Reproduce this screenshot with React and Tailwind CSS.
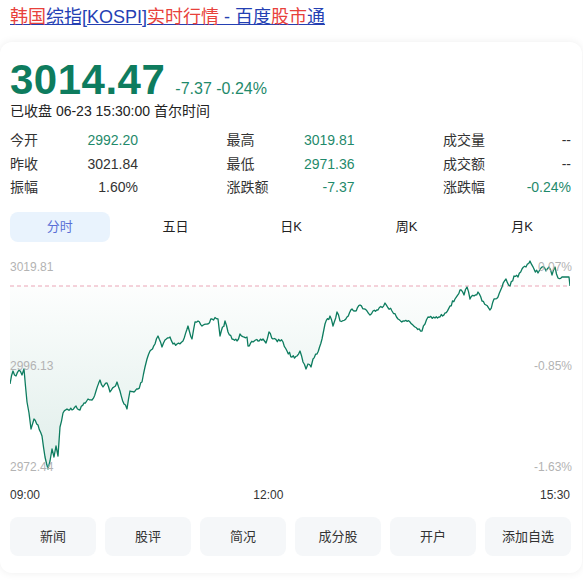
import { useMemo } from 'react';

const FONT = { fontFamily: '"Liberation Sans", Arial, "Noto Sans CJK SC", sans-serif' };

const KEYS = [
  [10, 385], [13, 372], [16, 377], [19, 371], [22, 376], [24, 370], [27, 403], [29, 414], [31, 430], [34, 420],
  [38, 426], [42, 437], [45, 458], [48, 470], [50, 462], [52, 450], [54, 458], [56, 447], [58, 457], [60, 428],
  [63, 414], [67, 410], [72, 411], [76, 407], [80, 411], [84, 404], [88, 400], [92, 401], [96, 392], [100, 381],
  [103, 388], [107, 384], [110, 393], [114, 388], [117, 383], [120, 392], [124, 405], [127, 410], [130, 392],
  [134, 393], [138, 390], [142, 383], [145, 368], [147, 360], [150, 352], [155, 345], [158, 337], [162, 348],
  [165, 341], [170, 338], [173, 345], [177, 345], [183, 342], [188, 327], [192, 340], [195, 323], [198, 322],
  [202, 327], [207, 325], [212, 320], [218, 320], [220, 337], [225, 322], [228, 333], [232, 340], [237, 342],
  [240, 335], [247, 338], [248, 347], [253, 343], [258, 342], [263, 340], [266, 344], [269, 333], [273, 340],
  [283, 343], [287, 352], [292, 358], [297, 357], [300, 352], [303, 363], [306, 370], [308, 365], [311, 368],
  [313, 360], [317, 355], [322, 340], [325, 325], [330, 317], [333, 327], [337, 313], [340, 322], [347, 318],
  [352, 310], [355, 312], [360, 306], [367, 312], [370, 316], [373, 312], [378, 311], [385, 304], [392, 312],
  [398, 320], [403, 322], [410, 323], [415, 328], [422, 332], [425, 325], [428, 318], [435, 319], [440, 318],
  [445, 314], [450, 307], [455, 300], [460, 291], [464, 296], [467, 288], [470, 300], [474, 297], [478, 293],
  [482, 302], [486, 306], [490, 311], [494, 300], [498, 298], [502, 288], [506, 280], [510, 287], [514, 277],
  [518, 278], [522, 270], [526, 268], [530, 262], [534, 270], [538, 274], [542, 268], [546, 272], [549, 268],
  [552, 276], [555, 268], [558, 279], [562, 278], [569, 278], [570, 287],
];

// chart box starts at screen (10, 255)
const OX = 10;
const OY = 255;

function buildPoints() {
  let seed = 7;
  const rand = () => {
    seed = (seed * 16807) % 2147483647;
    return seed / 2147483647;
  };
  const pts = [];
  for (let i = 0; i < KEYS.length - 1; i++) {
    const [x0, y0] = KEYS[i];
    const [x1, y1] = KEYS[i + 1];
    const last = i >= KEYS.length - 3;
    const steps = Math.max(1, Math.round((x1 - x0) / 1.4));
    for (let s = 0; s < steps; s++) {
      const t = s / steps;
      let y = y0 + (y1 - y0) * t;
      if (!last && s > 0) y += (rand() - 0.5) * 3.5;
      pts.push([x0 + (x1 - x0) * t - OX, y - OY]);
    }
  }
  const [lx, ly] = KEYS[KEYS.length - 1];
  pts.push([lx - OX, ly - OY]);
  return pts;
}

function Chart() {
  const pts = useMemo(buildPoints, []);
  const line = pts.map((p, i) => `${i ? 'L' : 'M'}${p[0].toFixed(1)} ${p[1].toFixed(1)}`).join(' ');
  const base = 32;
  const area = `${line} L${pts[pts.length - 1][0]} ${base} L${pts[0][0]} ${base} Z`;

  return (
    <div className="relative h-[225px] mt-3">
      <svg width="560" height="225" viewBox="0 0 560 225" className="block">
        <defs>
          <linearGradient id="fillg" x1="0" y1="32" x2="0" y2="215" gradientUnits="userSpaceOnUse">
            <stop offset="0" stopColor="#0e7c5e" stopOpacity="0.01" />
            <stop offset="1" stopColor="#0e7c5e" stopOpacity="0.13" />
          </linearGradient>
        </defs>
        <path d={area} fill="url(#fillg)" />
        <line x1="0" y1={base} x2="560" y2={base} stroke="#eaa5b6" strokeWidth="1" strokeDasharray="4 3" />
        <path d={line} fill="none" stroke="#0d7c5f" strokeWidth="1.3" strokeLinejoin="round" />
      </svg>
      {/* axis labels sit over the plot */}
      <span className="absolute left-0 top-[5px] text-[12px] leading-4 text-[#b3b3b3]">3019.81</span>
      <span className="absolute right-0 top-[5px] text-[12px] leading-4 text-[#b3b3b3]">0.07%</span>
      <span className="absolute left-0 top-[104px] text-[12px] leading-4 text-[#b3b3b3]">2996.13</span>
      <span className="absolute right-0 top-[104px] text-[12px] leading-4 text-[#b3b3b3]">-0.85%</span>
      <span className="absolute left-0 top-[205px] text-[12px] leading-4 text-[#b3b3b3]">2972.44</span>
      <span className="absolute right-0 top-[205px] text-[12px] leading-4 text-[#b3b3b3]">-1.63%</span>
    </div>
  );
}

function Stat({ label, value, green }) {
  return (
    <div className="w-[128px] flex justify-between items-center">
      <span className="text-[#333]">{label}</span>
      <span className={green ? 'text-[#1f8a6b]' : 'text-[#333]'}>{value}</span>
    </div>
  );
}

const rows = [
  [['今开', '2992.20', true], ['最高', '3019.81', true], ['成交量', '--', false]],
  [['昨收', '3021.84', false], ['最低', '2971.36', true], ['成交额', '--', false]],
  [['振幅', '1.60%', false], ['涨跌额', '-7.37', true], ['涨跌幅', '-0.24%', true]],
];

const tabs = ['分时', '五日', '日K', '周K', '月K'];
const buttons = ['新闻', '股评', '简况', '成分股', '开户', '添加自选'];

export default function App() {
  return (
    <div className="w-[583px] h-[581px] bg-white overflow-hidden" style={FONT}>
      <div className="px-[10px] pt-[6px] h-[42px]">
        <a className="text-[18px] leading-[22px] underline text-[#2440b3]" href="#">
          <span className="text-[#e8413b]">韩国</span>综指[KOSPI]<span className="text-[#e8413b]">实时行情</span> - 百度<span className="text-[#e8413b]">股市</span>通
        </a>
      </div>

      <div className="w-[582px] rounded-xl bg-white shadow-[0_0_8px_rgba(0,0,0,0.07)] px-[10px] pt-[17px] pb-[17px]">
        <div className="flex items-baseline">
          <span className="text-[42px] leading-[42px] font-bold text-[#0e7c5e] tracking-[0.5px]">3014.47</span>
          <span className="ml-[10px] text-[16px] text-[#1f8a6b]">-7.37 -0.24%</span>
        </div>
        <div className="text-[14px] leading-5 text-[#222]">已收盘 06-23 15:30:00 首尔时间</div>

        <div className="mt-2 w-[561px] text-[14px]">
          {rows.map((r, i) => (
            <div key={i} className="h-[23.5px] flex justify-between items-center">
              {r.map(([l, v, g]) => (
                <Stat key={l} label={l} value={v} green={g} />
              ))}
            </div>
          ))}
        </div>

        <div className="mt-[12.5px] flex gap-4 text-[13px]">
          {tabs.map((t, i) => (
            <div
              key={t}
              className={
                'w-[100px] h-[30px] flex items-center justify-center rounded-lg ' +
                (i === 0 ? 'bg-[#e9f3fd] text-[#5a6fd6]' : 'text-[#222]')
              }
            >
              {t}
            </div>
          ))}
        </div>

        <Chart />

        <div className="mt-[6px] h-5 flex text-[12px] leading-5 text-[#333] w-[560px]">
          <span>09:00</span>
          <span className="grow-[212]" />
          <span>12:00</span>
          <span className="grow-[255]" />
          <span>15:30</span>
        </div>

        <div className="mt-3 w-[561px] flex justify-between text-[13px] text-[#333]">
          {buttons.map((b) => (
            <div key={b} className="w-[86px] h-[39px] flex items-center justify-center rounded-lg bg-[#f5f7f9]">
              {b}
            </div>
          ))}
        </div>
      </div>
    </div>
  );
}
